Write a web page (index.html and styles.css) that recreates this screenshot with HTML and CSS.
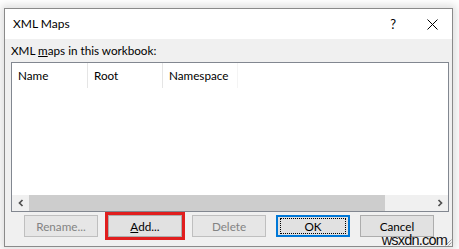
FILE: index.html
```html
<!DOCTYPE html>
<html>
<head>
<meta charset="utf-8">
<link rel="stylesheet" href="styles.css">
</head>
<body>
<div class="window">
  <div class="titlebar">
    <span class="title">XML Maps</span>
    <span class="help">?</span>
    <svg class="close" width="11" height="11" viewBox="0 0 11 11"><path d="M0.5 0.5 L10.5 10.5 M10.5 0.5 L0.5 10.5" stroke="#000" stroke-width="1" fill="none"/></svg>
  </div>
  <div class="body">
    <div class="label">XML <u>m</u>aps in this workbook:</div>
    <div class="list">
      <div class="header">
        <div class="col c1">Name</div>
        <div class="col c2">Root</div>
        <div class="col c3">Namespace</div>
      </div>
      <div class="rows"></div>
      <div class="hscroll">
        <div class="arrow"><svg width="8" height="8" viewBox="0 0 8 8"><path d="M5.5 1 L2.5 4 L5.5 7" stroke="#505050" stroke-width="1.7" fill="none"/></svg></div>
        <div class="thumb"></div>
        <div class="track"></div>
        <div class="arrow"><svg width="8" height="8" viewBox="0 0 8 8"><path d="M2.5 1 L5.5 4 L2.5 7" stroke="#505050" stroke-width="1.7" fill="none"/></svg></div>
      </div>
    </div>
    <div class="buttons">
      <div class="btn disabled">Rename...</div>
      <div class="btn marked"><u>A</u>dd...</div>
      <div class="btn disabled">Delete</div>
      <div class="btn default"><span class="focus">OK</span></div>
      <div class="btn">Cancel</div>
    </div>
    <svg class="grip" width="7" height="7" viewBox="0 0 7 7"><path d="M6.5 0.5 L0.5 6.5 M6.5 3.5 L3.5 6.5" stroke="#a0a0a0" stroke-width="1" fill="none"/></svg>
  </div>
  <div class="watermark">wsxdn.com</div>
</div>
</body>
</html>
```
FILE: styles.css
```css
html, body {
  margin: 0;
  padding: 0;
}
body {
  width: 459px;
  height: 249px;
  overflow: hidden;
  background: #ffffff;
  font-family: "Lato", "Noto Sans", sans-serif;
  font-size: 11.7px;
  color: #000;
}
.window {
  position: relative;
  margin: 8px 0 0 4px;
  width: 447px;
  height: 237px;
  border: 1px solid #8a8a8a;
  background: #f0f0f0;
  box-shadow: 0 0 8px 3px rgba(0,0,0,0.13);
  display: flex;
  flex-direction: column;
}
.titlebar {
  height: 30px;
  background: #fff;
  display: flex;
  align-items: center;
  padding-left: 8px;
  flex: none;
}
.title {
  font-size: 12px;
  flex: 1;
  padding-bottom: 1px;
}
.help {
  font-size: 13px;
  margin-right: 31px;
  padding-bottom: 1px;
}
.close {
  margin-right: 14px;
}
.body {
  position: relative;
  flex: 1;
  padding: 3px 3px 0 6px;
  display: flex;
  flex-direction: column;
}
.label {
  line-height: 16px;
  height: 16px;
  margin-bottom: 4px;
}
.list {
  height: 148px;
  border: 1px solid #828790;
  background: #fff;
  display: flex;
  flex-direction: column;
}
.header {
  display: flex;
  height: 25px;
  flex: none;
}
.col {
  padding-left: 6px;
  line-height: 24px;
  border-right: 1px solid #e5e5e5;
}
.c1 { width: 69px; }
.c2 { width: 68px; }
.c3 { width: 68px; border-right-color: #f4f4f4; }
.rows {
  flex: 1;
}
.hscroll {
  height: 16px;
  flex: none;
  display: flex;
  background: #f0f0f0;
}
.arrow {
  width: 17px;
  display: flex;
  align-items: center;
  justify-content: center;
  background: #f0f0f0;
}
.thumb {
  width: 356px;
  background: #cdcdcd;
}
.track {
  flex: 1;
}
.buttons {
  display: flex;
  gap: 10px;
  padding-left: 13px;
  margin-top: 3px;
}
.btn {
  box-sizing: border-box;
  width: 74px;
  height: 22px;
  border: 1px solid #adadad;
  background: #e1e1e1;
  display: flex;
  align-items: center;
  justify-content: center;
  line-height: 16px;
}
.btn.disabled {
  color: #838383;
  border-color: #bfbfbf;
  background: #e6e6e6;
}
.btn.marked {
  outline: 3px solid #e01e1e;
}
.btn.default {
  border: 2px solid #0078d7;
}
.focus {
  box-sizing: border-box;
  width: 66px;
  height: 16px;
  border: 1px dotted #000;
  text-align: center;
  line-height: 14px;
}
.grip {
  position: absolute;
  right: 0;
  bottom: 0;
}
.watermark {
  position: absolute;
  right: 5px;
  bottom: -1px;
  font-family: "Liberation Sans", sans-serif;
  font-size: 14.5px;
  letter-spacing: -0.8px;
  color: #111;
  line-height: 14px;
}
```
